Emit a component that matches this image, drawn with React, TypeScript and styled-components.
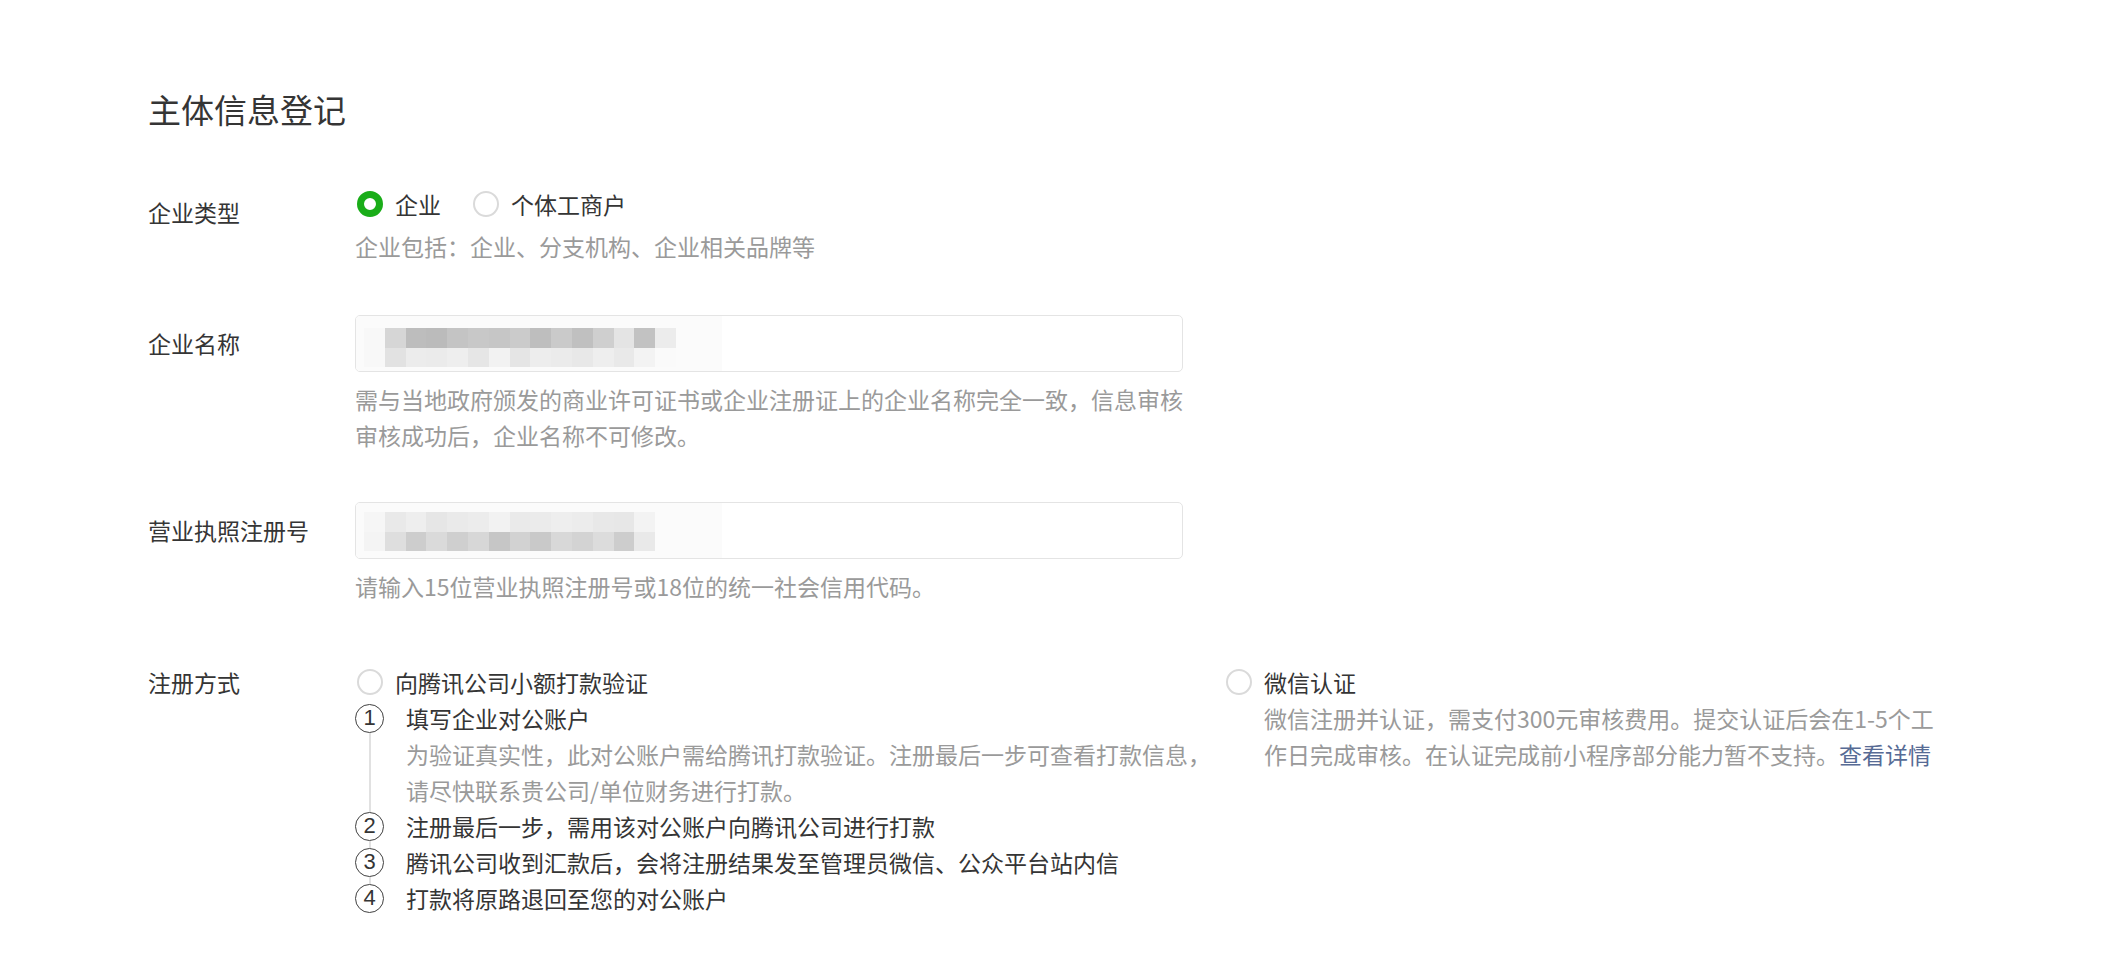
import React from 'react'
import styled, { createGlobalStyle } from 'styled-components'

const GlobalStyle = createGlobalStyle`
  body {
    margin: 0;
    background: #fff;
    font-family: "Noto Sans CJK SC", "Noto Sans", sans-serif;
    font-size: 23px;
    color: #353535;
  }
`

const Page = styled.div`
  padding: 86px 0 40px 148px;
`

const Title = styled.h2`
  margin: 0;
  font-size: 33px;
  font-weight: 400;
  line-height: 46px;
  color: #353535;
`

const Form = styled.div`
  margin-top: 54px;
`

const Row = styled.div<{ $gap: number }>`
  display: flex;
  margin-top: ${p => p.$gap}px;
`

const Label = styled.div<{ $lh: number; $offset?: number }>`
  flex: 0 0 207px;
  line-height: ${p => p.$lh}px;
  padding-top: ${p => p.$offset || 0}px;
`

const Control = styled.div`
  flex: 1;
  display: flex;
  flex-direction: column;
`

const RadioLine = styled.div`
  display: flex;
  align-items: center;
  height: 36px;
`

const RadioItem = styled.label`
  display: flex;
  align-items: center;
  gap: 12px;
  margin-right: 30px;
  line-height: 36px;
  white-space: nowrap;
`

const RadioDot = styled.span<{ $on?: boolean }>`
  box-sizing: border-box;
  width: 26px;
  height: 26px;
  border-radius: 50%;
  margin-left: 2px;
  background: #fff;
  border: ${p => (p.$on ? '7px solid #1aad19' : '2px solid #dadada')};
  flex: 0 0 auto;
`

const Hint = styled.div<{ $mt?: number; $w?: number }>`
  color: #9a9a9a;
  line-height: 36px;
  margin-top: ${p => p.$mt || 0}px;
  width: ${p => (p.$w ? p.$w + 'px' : 'auto')};
`

const Input = styled.div`
  box-sizing: border-box;
  width: 828px;
  height: 57px;
  border: 1px solid #e4e4e4;
  border-radius: 5px;
  overflow: hidden;
  display: flex;
`

const Mosaic = styled.div<{ $top: number }>`
  width: 366px;
  height: 100%;
  background: #fbfbfb;
  padding: ${p => p.$top}px 0 0 8px;
  box-sizing: border-box;
  display: grid;
  grid-template-columns: repeat(15, 20.8px);
  grid-auto-rows: 19.5px;
`

const Cell = styled.span<{ $shade: string }>`
  background: ${p => p.$shade};
`

const Options = styled.div`
  display: flex;
`

const OptionLeft = styled.div`
  flex: 0 0 867px;
`

const OptionRight = styled.div`
  flex: 0 0 730px;
  padding-left: 2px;
`

const OptionBody = styled.div`
  padding-left: 40px;
`

const Step = styled.div`
  display: flex;
`

const Marker = styled.div`
  flex: 0 0 28px;
  margin-right: 22px;
  display: flex;
  flex-direction: column;
  align-items: center;
`

const Circle = styled.span`
  box-sizing: border-box;
  width: 29px;
  height: 29px;
  margin-top: 3.5px;
  border-radius: 50%;
  border: 1.5px solid #404040;
  font-family: "Liberation Sans", "Noto Sans", sans-serif;
  font-size: 22px;
  line-height: 26px;
  text-align: center;
  color: #353535;
  flex: 0 0 auto;
`

const Line = styled.span`
  flex: 1;
  width: 2px;
  background: #e1e1e1;
  margin-bottom: -4px;
`

const StepBody = styled.div`
  flex: 0 0 815px;
  line-height: 36px;
`

const StepDesc = styled.div`
  color: #9a9a9a;
`

const Link = styled.a`
  color: #576b95;
  text-decoration: none;
`

const nameShades = [
  ['#f8f8f8', '#d6d6d6', '#bdbdbd', '#bbbbbb', '#c4c4c4', '#c8c8c8', '#c6c6c6', '#cbcbcb', '#bebebe', '#cacaca', '#c0c0c0', '#cfcfcf', '#e4e4e4', '#c2c2c2', '#ececec'],
  ['#f8f8f8', '#e2e2e2', '#ececec', '#ebebeb', '#eeeeee', '#e6e6e6', '#f2f2f2', '#e5e5e5', '#ededed', '#ebebeb', '#e8e8e8', '#eeeeee', '#e9e9e9', '#f3f3f3', '#fafafa'],
]

const numberShades = [
  ['#f6f6f6', '#e9e9e9', '#eeeeee', '#e6e6e6', '#eaeaea', '#ececec', '#f2f2f2', '#eaeaea', '#ebebeb', '#eeeeee', '#ececec', '#e8e8e8', '#e7e7e7', '#f3f3f3', '#fbfbfb'],
  ['#f4f4f4', '#dedede', '#cdcdcd', '#dadada', '#cfcfcf', '#d7d7d7', '#c6c6c6', '#d2d2d2', '#c9c9c9', '#d8d8d8', '#d3d3d3', '#dcdcdc', '#cdcdcd', '#e9e9e9', '#fbfbfb'],
]

const Blurred: React.FC<{ shades: string[][]; top: number }> = ({ shades, top }) => (
  <Mosaic $top={top}>
    {shades.flat().map((s, i) => (
      <Cell key={i} $shade={s} />
    ))}
  </Mosaic>
)

const steps = [
  {
    title: '填写企业对公账户',
    desc: '为验证真实性，此对公账户需给腾讯打款验证。注册最后一步可查看打款信息，请尽快联系贵公司/单位财务进行打款。',
  },
  { title: '注册最后一步，需用该对公账户向腾讯公司进行打款' },
  { title: '腾讯公司收到汇款后，会将注册结果发至管理员微信、公众平台站内信' },
  { title: '打款将原路退回至您的对公账户' },
]

const App: React.FC = () => {
  return (
    <Page>
      <GlobalStyle />
      <Title>主体信息登记</Title>
      <Form>
        <Row $gap={0}>
          <Label $lh={36} $offset={8}>企业类型</Label>
          <Control>
            <RadioLine>
              <RadioItem>
                <RadioDot $on />
                企业
              </RadioItem>
              <RadioItem>
                <RadioDot />
                个体工商户
              </RadioItem>
            </RadioLine>
            <Hint $mt={6}>企业包括：企业、分支机构、企业相关品牌等</Hint>
          </Control>
        </Row>

        <Row $gap={51}>
          <Label $lh={57}>企业名称</Label>
          <Control>
            <Input>
              <Blurred shades={nameShades} top={12} />
            </Input>
            <Hint $mt={9} $w={842}>
              需与当地政府颁发的商业许可证书或企业注册证上的企业名称完全一致，信息审核审核成功后，企业名称不可修改。
            </Hint>
          </Control>
        </Row>

        <Row $gap={49}>
          <Label $lh={57}>营业执照注册号</Label>
          <Control>
            <Input>
              <Blurred shades={numberShades} top={9} />
            </Input>
            <Hint $mt={9}>请输入15位营业执照注册号或18位的统一社会信用代码。</Hint>
          </Control>
        </Row>

        <Row $gap={60}>
          <Label $lh={36}>注册方式</Label>
          <Control>
            <Options>
              <OptionLeft>
                <RadioLine>
                  <RadioItem>
                    <RadioDot />
                    向腾讯公司小额打款验证
                  </RadioItem>
                </RadioLine>
                {steps.map((s, i) => (
                  <Step key={i}>
                    <Marker>
                      <Circle>{i + 1}</Circle>
                      {i < steps.length - 1 && <Line />}
                    </Marker>
                    <StepBody>
                      {s.title}
                      {s.desc && <StepDesc>{s.desc}</StepDesc>}
                    </StepBody>
                  </Step>
                ))}
              </OptionLeft>
              <OptionRight>
                <RadioLine>
                  <RadioItem>
                    <RadioDot />
                    微信认证
                  </RadioItem>
                </RadioLine>
                <OptionBody>
                  <Hint $w={686}>
                    微信注册并认证，需支付300元审核费用。提交认证后会在1-5个工作日完成审核。在认证完成前小程序部分能力暂不支持。
                    <Link href="#">查看详情</Link>
                  </Hint>
                </OptionBody>
              </OptionRight>
            </Options>
          </Control>
        </Row>
      </Form>
    </Page>
  )
}

export default App
